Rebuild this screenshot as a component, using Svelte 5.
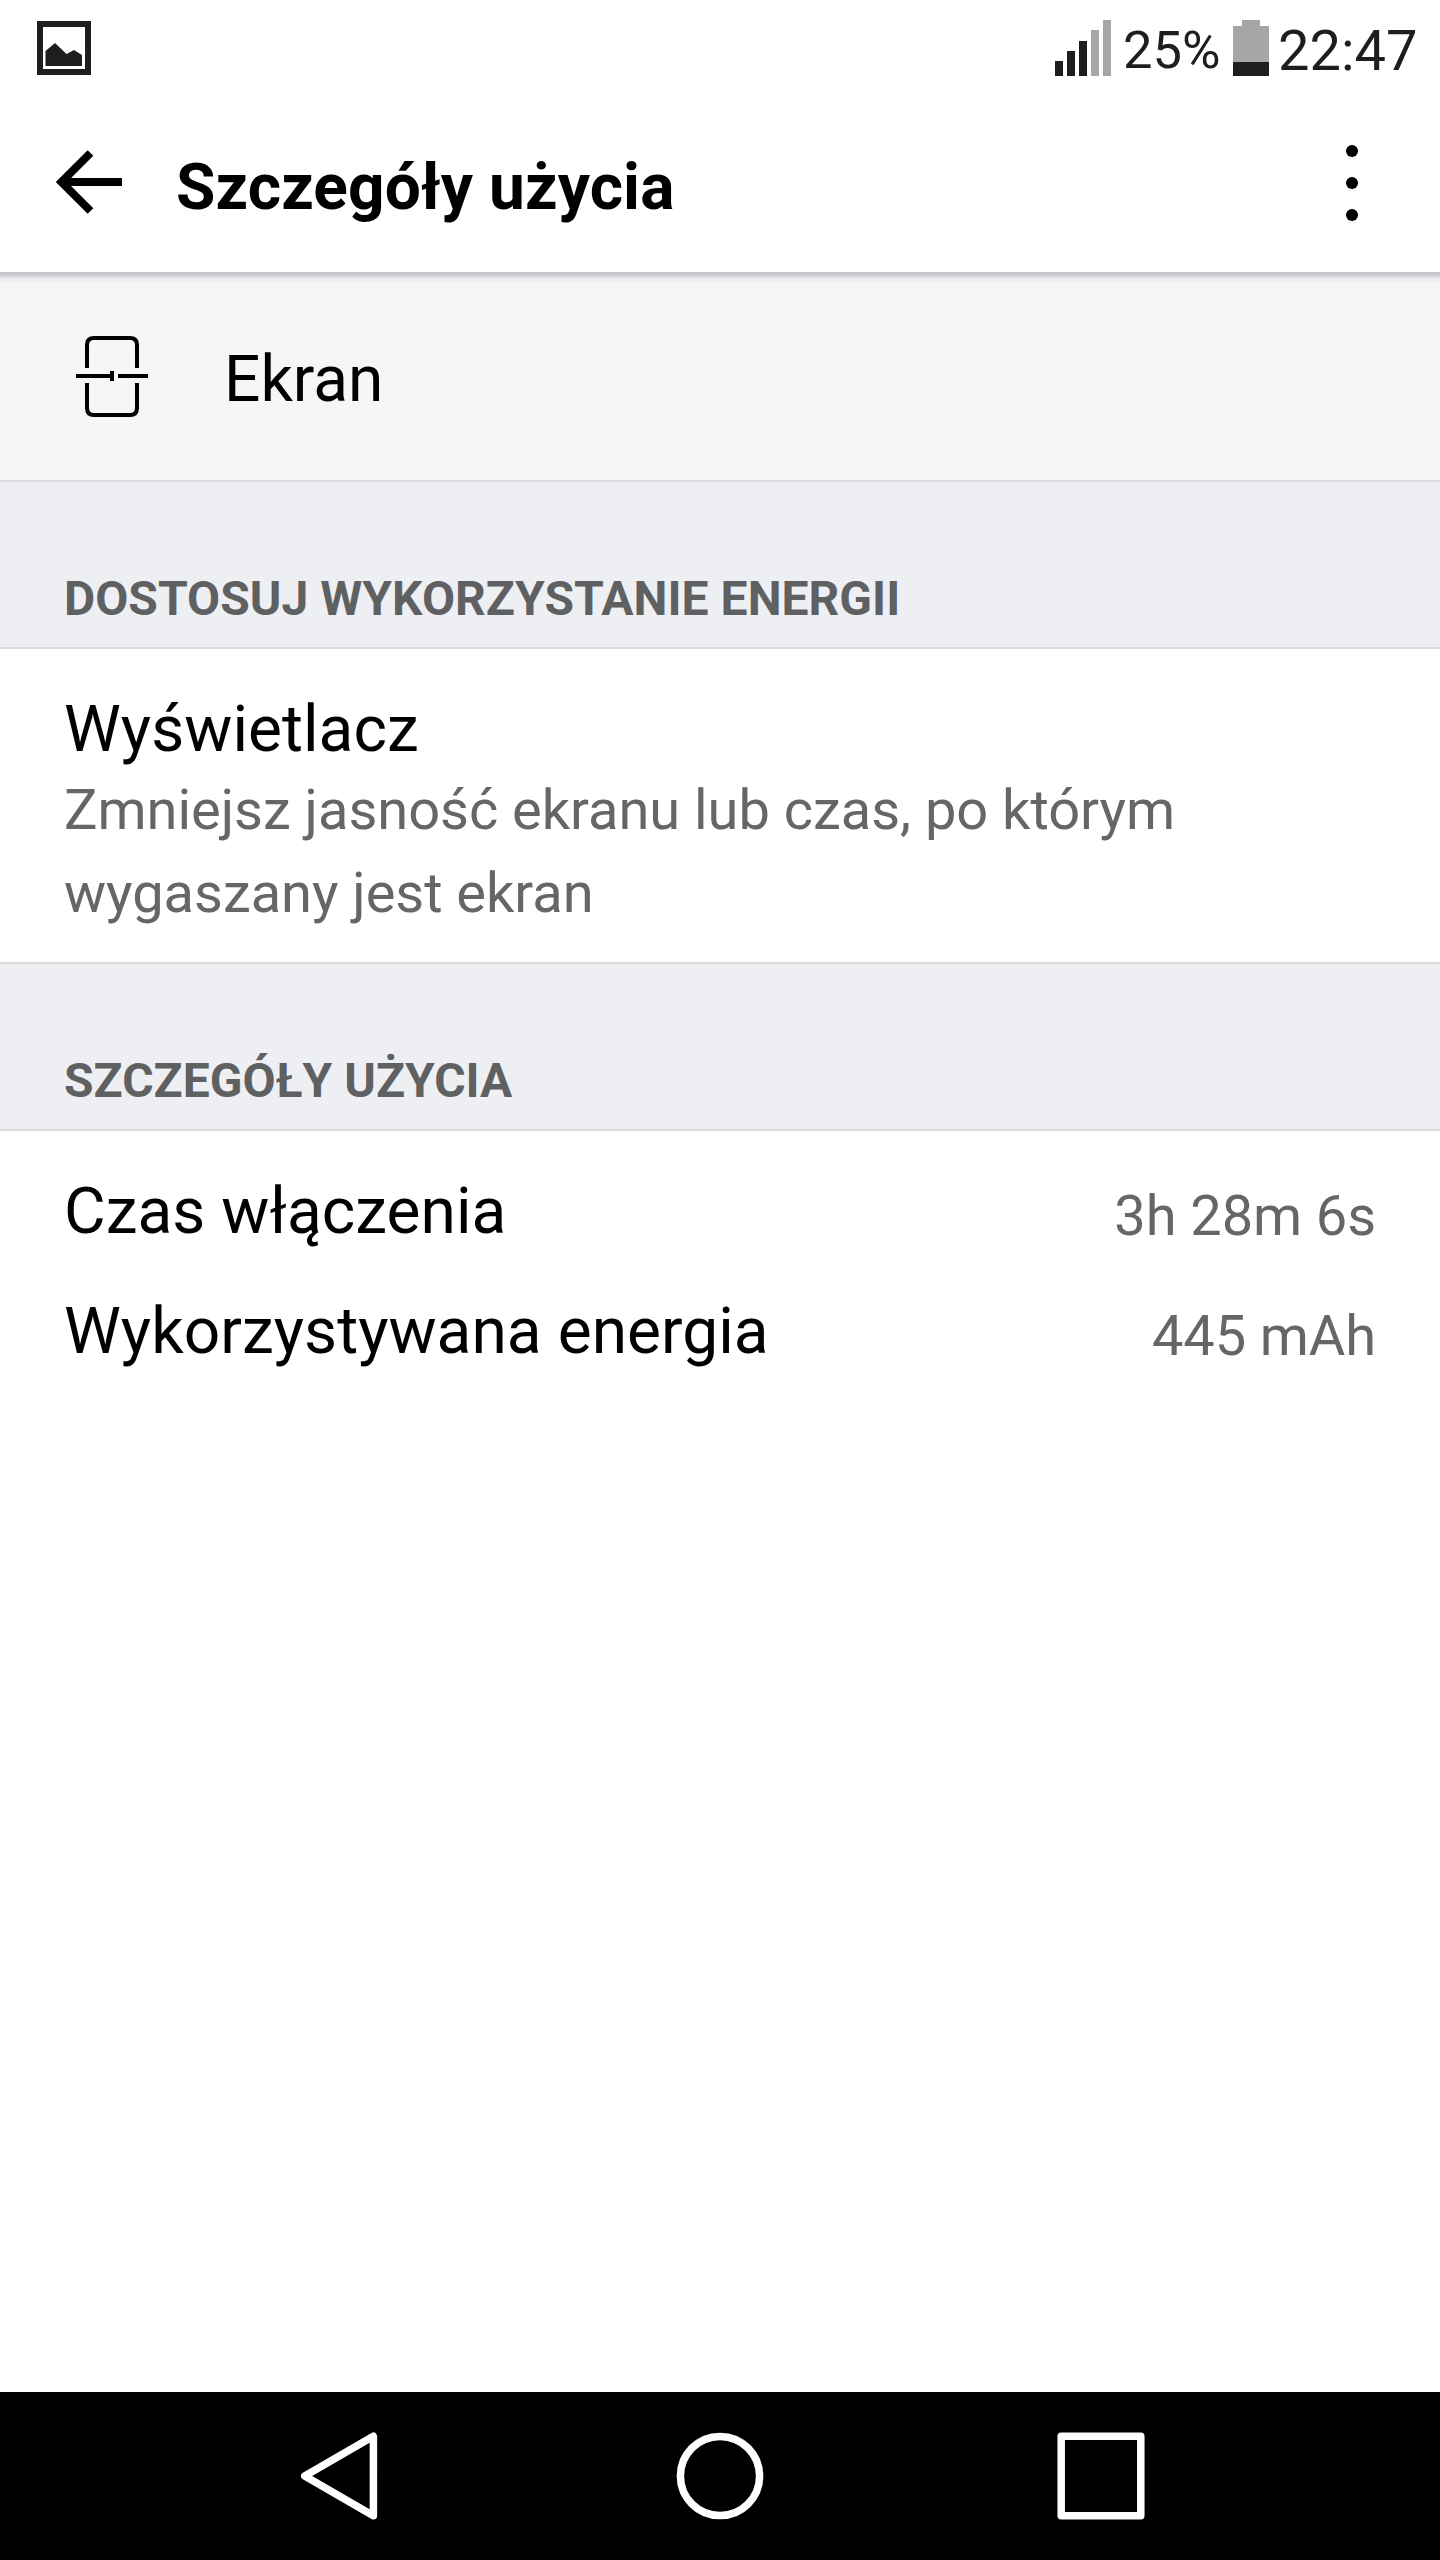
<script>
  const rows = [
    { label: 'Czas włączenia', value: '3h 28m 6s' },
    { label: 'Wykorzystywana energia', value: '445 mAh' }
  ];
  const bars = [
    { x: 0, h: 15, on: true },
    { x: 12, h: 25, on: true },
    { x: 24, h: 35, on: true },
    { x: 36, h: 46, on: false },
    { x: 48, h: 56, on: false }
  ];
</script>

<div class="screen">
  <div class="status">
    <svg class="picture" width="54" height="54" viewBox="0 0 54 54">
      <rect x="3" y="3" width="48" height="48" fill="none" stroke="#1e1e1e" stroke-width="6" />
      <path d="M8.500 45V30L18 22l11.500 11L37 29l8 5v11z" fill="#1e1e1e" />
    </svg>
    <svg class="signal" width="56" height="56" viewBox="0 0 56 56">
      {#each bars as b}
        <rect x={b.x} y={56 - b.h} width="8" height={b.h} fill={b.on ? '#1e1e1e' : '#a6a6a6'} />
      {/each}
    </svg>
    <span class="percent">25%</span>
    <svg class="battery" width="36" height="56" viewBox="0 0 36 56">
      <path d="M9 0h18v6h9v36H0V6h9z" fill="#a6a6a6" />
      <rect y="42" width="36" height="14" fill="#1e1e1e" />
    </svg>
    <span class="clock">22:47</span>
  </div>

  <header>
    <svg class="back" width="66" height="64" viewBox="0 0 66 64">
      <path d="M34.500 3L5.500 32l29 29M8 32h58" fill="none" stroke="#000" stroke-width="8" />
    </svg>
    <h1>Szczegóły użycia</h1>
    <svg class="more" width="12" height="76" viewBox="0 0 12 76">
      <circle cx="6" cy="6" r="6" /><circle cx="6" cy="38" r="6" /><circle cx="6" cy="70" r="6" />
    </svg>
  </header>

  <section class="item">
    <svg width="72" height="81" viewBox="0 0 72 81" fill="none" stroke="#000" stroke-width="4">
      <path d="M11 32V9q0-7 7-7h36q7 0 7 7v23M11 47v25q0 7 7 7h36q7 0 7-7V47M0 40h36M42 40h30M36 35v10" />
    </svg>
    <span>Ekran</span>
  </section>

  <h2>DOSTOSUJ WYKORZYSTANIE ENERGII</h2>
  <section class="display">
    <div class="label">Wyświetlacz</div>
    <p>Zmniejsz jasność ekranu lub czas, po którym wygaszany jest ekran</p>
  </section>

  <h2>SZCZEGÓŁY UŻYCIA</h2>
  <section class="details">
    {#each rows as r}
      <div class="row">
        <span class="label">{r.label}</span>
        <span class="value">{r.value}</span>
      </div>
    {/each}
  </section>

  <nav>
    <svg width="88" height="88" viewBox="0 0 88 88">
      <path d="M78.400 4.300V83.700L9.700 44z" />
    </svg>
    <svg width="88" height="88" viewBox="0 0 88 88">
      <circle cx="44" cy="44" r="39.600" />
    </svg>
    <svg width="88" height="88" viewBox="0 0 88 88">
      <rect x="4.200" y="4.200" width="79.600" height="79.600" />
    </svg>
  </nav>
</div>

<style>
  :global(body) {
    margin: 0;
  }
  .screen {
    display: flex;
    flex-direction: column;
    width: 1440px;
    height: 2560px;
    background: #fff;
    color: #000;
    font-family: Roboto, sans-serif;
    overflow: hidden;
  }
  svg {
    display: block;
    flex: none;
  }
  h1,
  h2,
  p {
    margin: 0;
  }
  .status {
    display: flex;
    align-items: flex-start;
    box-sizing: border-box;
    height: 96px;
    padding: 20px 26px 0 37px;
    color: #1e1e1e;
  }
  .picture {
    margin-top: 1px;
  }
  .signal {
    margin-left: auto;
  }
  .percent {
    width: 110px;
    margin-left: 12px;
    font-size: 52.5px;
    line-height: 60px;
  }
  .clock {
    width: 136px;
    margin-left: 9px;
    font-size: 56px;
    line-height: 62px;
    white-space: nowrap;
  }
  header {
    display: flex;
    align-items: flex-start;
    box-sizing: border-box;
    height: 176px;
    padding: 49px 82px 0 56px;
  }
  .back {
    margin-top: 5px;
  }
  h1 {
    margin-left: 54px;
    padding-top: 3px;
    font-size: 64px;
    line-height: 80px;
    font-weight: 700;
    letter-spacing: 0.12px;
  }
  .more {
    margin-left: auto;
  }
  .item {
    display: flex;
    box-sizing: border-box;
    height: 210px;
    padding: 64px 76px 0;
    background: linear-gradient(#c5c6c8 0 2px, #cfd0d2 3px, #d9dadd 5px, #edeef2 6px 10px, #f5f6f8 10px);
    border-bottom: 2px solid #dadbdd;
  }
  .item span {
    margin-left: 76px;
    padding-top: 4px;
    font-size: 64px;
    line-height: 80px;
  }
  h2 {
    box-sizing: border-box;
    height: 167px;
    padding: 87px 64px 0;
    background: #eeeff3;
    border-bottom: 2px solid #dadbdd;
    color: #5f6062;
    font-size: 48px;
    line-height: 60px;
    font-weight: 700;
    letter-spacing: 0.04px;
  }
  .display {
    box-sizing: border-box;
    height: 315px;
    padding: 41px 64px 0;
    border-bottom: 2px solid #dadbdd;
  }
  .label {
    font-size: 64px;
    line-height: 80px;
    letter-spacing: 0.05px;
  }
  p {
    width: 1180px;
    margin-top: -1px;
    color: #666;
    font-size: 56px;
    line-height: 83px;
    letter-spacing: -0.03px;
  }
  .details {
    flex: 1;
    padding: 21px 64px 0;
  }
  .row {
    display: flex;
    justify-content: space-between;
    height: 100px;
    padding-top: 20px;
  }
  .value {
    padding-top: 4px;
    color: #666;
    font-size: 56px;
    line-height: 80px;
    letter-spacing: -0.1px;
  }
  nav {
    display: flex;
    align-items: center;
    justify-content: center;
    gap: 293px;
    height: 168px;
    background: #000;
  }
  nav svg {
    fill: none;
    stroke: #fff;
    stroke-width: 7.5px;
    stroke-linejoin: round;
  }
</style>
